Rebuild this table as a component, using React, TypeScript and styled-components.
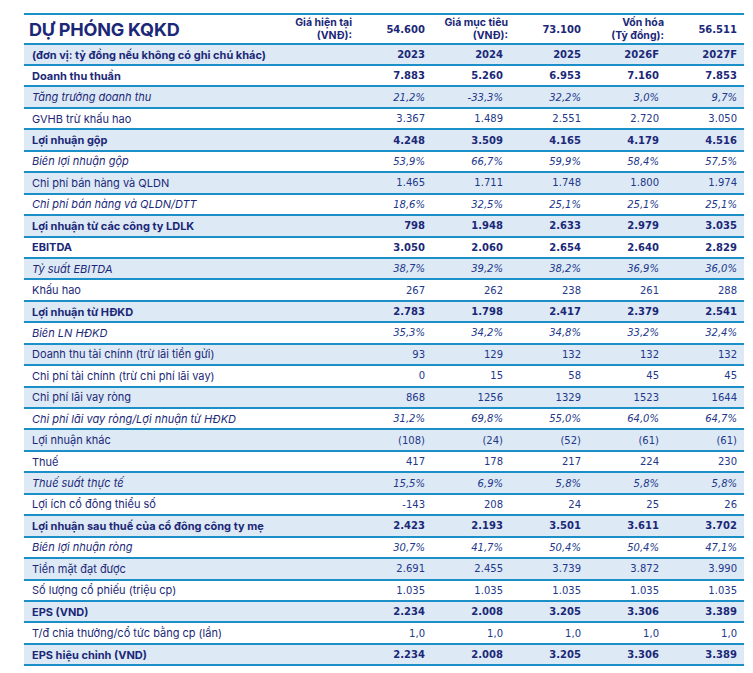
import React from 'react';
import styled, { createGlobalStyle, css } from 'styled-components';

const navy = '#1b2878';
const numberBlue = '#22378a';
const line = '#1b8fc8';
const band = '#dde9f5';

const GlobalStyle = createGlobalStyle`
  body {
    margin: 0;
    background: #ffffff;
    font-family: Inter, "Noto Sans", sans-serif;
  }
`;

const Page = styled.div`
  padding: 13px 0 0 24px;
  width: 720px;
`;

const Table = styled.div`
  border-top: 2px solid ${line};
  width: 720px;
`;

type RowKind = 'normal' | 'bold' | 'italic';

const Row = styled.div<{ $band?: boolean; $h?: number }>`
  display: grid;
  grid-template-columns: 330px repeat(5, 78px);
  align-items: center;
  box-sizing: border-box;
  height: ${(p) => p.$h ?? 21.45}px;
  border-bottom: 2px solid ${line};
  background: ${(p) => (p.$band ? band : '#ffffff')};
`;

const Label = styled.div<{ $kind: RowKind }>`
  padding-left: 8px;
  font-size: 11px;
  color: ${navy};
  white-space: nowrap;
  ${(p) =>
    p.$kind === 'bold' &&
    css`
      font-weight: 700;
    `}
  ${(p) =>
    p.$kind === 'italic' &&
    css`
      font-style: italic;
    `}
`;

const Num = styled.div<{ $kind: RowKind }>`
  text-align: right;
  padding-right: 7px;
  font-family: "DejaVu Sans", Verdana, sans-serif;
  font-size: 10px;
  color: ${numberBlue};
  ${(p) =>
    p.$kind === 'bold' &&
    css`
      font-weight: 700;
      color: ${navy};
    `}
  ${(p) =>
    p.$kind === 'italic' &&
    css`
      font-style: italic;
    `}
`;

const TitleCell = styled.div`
  display: flex;
  justify-content: space-between;
  align-items: center;
  padding-left: 5px;
`;

const Title = styled.h1`
  margin: 0;
  font-size: 18px;
  font-weight: 700;
  color: ${navy};
  letter-spacing: -0.2px;
`;

const HeadLabel = styled.div`
  text-align: right;
  font-size: 10.5px;
  font-weight: 700;
  line-height: 13px;
  color: ${navy};
  padding-right: 2px;
`;

const HeadValue = styled.div`
  text-align: right;
  padding-right: 7px;
  font-family: "DejaVu Sans", Verdana, sans-serif;
  font-size: 10px;
  font-weight: 700;
  color: ${navy};
`;

const years = ['2023', '2024', '2025', '2026F', '2027F'];

const rows: [string, string[], RowKind][] = [
  ['Doanh thu thuần', ['7.883', '5.260', '6.953', '7.160', '7.853'], 'bold'],
  ['Tăng trưởng doanh thu', ['21,2%', '-33,3%', '32,2%', '3,0%', '9,7%'], 'italic'],
  ['GVHB trừ khấu hao', ['3.367', '1.489', '2.551', '2.720', '3.050'], 'normal'],
  ['Lợi nhuận gộp', ['4.248', '3.509', '4.165', '4.179', '4.516'], 'bold'],
  ['Biên lợi nhuận gộp', ['53,9%', '66,7%', '59,9%', '58,4%', '57,5%'], 'italic'],
  ['Chi phí bán hàng và QLDN', ['1.465', '1.711', '1.748', '1.800', '1.974'], 'normal'],
  ['Chi phí bán hàng và QLDN/DTT', ['18,6%', '32,5%', '25,1%', '25,1%', '25,1%'], 'italic'],
  ['Lợi nhuận từ các công ty LDLK', ['798', '1.948', '2.633', '2.979', '3.035'], 'bold'],
  ['EBITDA', ['3.050', '2.060', '2.654', '2.640', '2.829'], 'bold'],
  ['Tỷ suất EBITDA', ['38,7%', '39,2%', '38,2%', '36,9%', '36,0%'], 'italic'],
  ['Khấu hao', ['267', '262', '238', '261', '288'], 'normal'],
  ['Lợi nhuận từ HĐKD', ['2.783', '1.798', '2.417', '2.379', '2.541'], 'bold'],
  ['Biên LN HĐKD', ['35,3%', '34,2%', '34,8%', '33,2%', '32,4%'], 'italic'],
  ['Doanh thu tài chính (trừ lãi tiền gửi)', ['93', '129', '132', '132', '132'], 'normal'],
  ['Chi phí tài chính (trừ chi phí lãi vay)', ['0', '15', '58', '45', '45'], 'normal'],
  ['Chi phí lãi vay ròng', ['868', '1256', '1329', '1523', '1644'], 'normal'],
  ['Chi phí lãi vay ròng/Lợi nhuận từ HĐKD', ['31,2%', '69,8%', '55,0%', '64,0%', '64,7%'], 'italic'],
  ['Lợi nhuận khác', ['(108)', '(24)', '(52)', '(61)', '(61)'], 'normal'],
  ['Thuế', ['417', '178', '217', '224', '230'], 'normal'],
  ['Thuế suất thực tế', ['15,5%', '6,9%', '5,8%', '5,8%', '5,8%'], 'italic'],
  ['Lợi ích cổ đông thiểu số', ['-143', '208', '24', '25', '26'], 'normal'],
  ['Lợi nhuận sau thuế của cổ đông công ty mẹ', ['2.423', '2.193', '3.501', '3.611', '3.702'], 'bold'],
  ['Biên lợi nhuận ròng', ['30,7%', '41,7%', '50,4%', '50,4%', '47,1%'], 'italic'],
  ['Tiền mặt đạt được', ['2.691', '2.455', '3.739', '3.872', '3.990'], 'normal'],
  ['Số lượng cổ phiếu  (triệu cp)', ['1.035', '1.035', '1.035', '1.035', '1.035'], 'normal'],
  ['EPS (VND)', ['2.234', '2.008', '3.205', '3.306', '3.389'], 'bold'],
  ['T/đ chia thưởng/cổ tức bằng cp (lần)', ['1,0', '1,0', '1,0', '1,0', '1,0'], 'normal'],
  ['EPS hiệu chỉnh (VND)', ['2.234', '2.008', '3.205', '3.306', '3.389'], 'bold'],
];

export default function App() {
  return (
    <Page>
      <GlobalStyle />
      <Table>
        <Row $h={30}>
          <TitleCell>
            <Title>DỰ PHÓNG KQKD</Title>
            <HeadLabel>
              Giá hiện tại
              <br />
              (VNĐ):
            </HeadLabel>
          </TitleCell>
          <HeadValue>54.600</HeadValue>
          <HeadLabel>
            Giá mục tiêu
            <br />
            (VNĐ):
          </HeadLabel>
          <HeadValue>73.100</HeadValue>
          <HeadLabel>
            Vốn hóa
            <br />
            (Tỷ đồng):
          </HeadLabel>
          <HeadValue>56.511</HeadValue>
        </Row>
        <Row $band $h={21}>
          <Label $kind="bold">(đơn vị: tỷ đồng nếu không có ghi chú khác)</Label>
          {years.map((y) => (
            <Num key={y} $kind="bold">
              {y}
            </Num>
          ))}
        </Row>
        {rows.map(([label, values, kind], i) => (
          <Row key={label} $band={i % 2 === 1}>
            <Label $kind={kind}>{label}</Label>
            {values.map((v, j) => (
              <Num key={j} $kind={kind}>
                {v}
              </Num>
            ))}
          </Row>
        ))}
      </Table>
    </Page>
  );
}
